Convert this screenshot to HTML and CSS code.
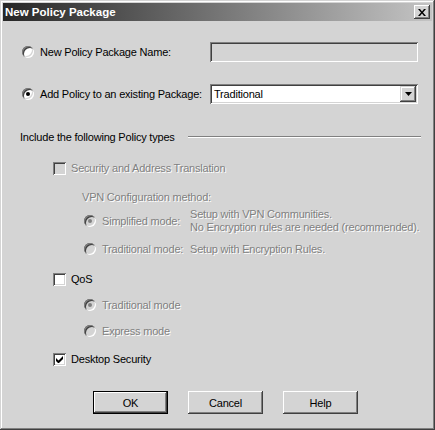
FILE: index.html
```html
<!DOCTYPE html>
<html>
<head>
<meta charset="utf-8">
<link rel="stylesheet" href="styles.css">
</head>
<body>
<div class="window">
  <div class="titlebar">
    <span class="title">New Policy Package</span>
    <span class="close"><svg width="8" height="7" viewBox="0 0 8 7"><path d="M0 0h2l2 2.5L6 0h2L5 3.5 8 7H6L4 4.5 2 7H0l3-3.5z" fill="#000"/></svg></span>
  </div>
  <div class="content">
    <div class="row r1">
      <span class="radio"></span>
      <span class="lbl wide">New Policy Package Name:</span>
      <span class="textbox"></span>
    </div>
    <div class="row r2">
      <span class="radio on"></span>
      <span class="lbl wide">Add Policy to an existing Package:</span>
      <span class="combo"><span class="combo-text">Traditional</span><span class="arrow"><svg width="7" height="4" viewBox="0 0 7 4"><path d="M0 0h7L3.5 4z" fill="#000"/></svg></span></span>
    </div>
    <div class="row heading">
      <span class="lbl head-lbl">Include the following Policy types</span>
      <span class="rule"></span>
    </div>
    <div class="row chkrow r-sat">
      <span class="check disabled"></span>
      <span class="lbl dis">Security and Address Translation</span>
    </div>
    <div class="row sub r-vpn">
      <span class="lbl dis">VPN Configuration method:</span>
    </div>
    <div class="row sub2 r-simp">
      <span class="radio on disabled"></span>
      <span class="lbl dis mode">Simplified mode:</span>
      <span class="lbl dis desc">Setup with VPN Communities.<br>No Encryption rules are needed (recommended).</span>
    </div>
    <div class="row sub2 r-trad">
      <span class="radio disabled"></span>
      <span class="lbl dis mode">Traditional mode:</span>
      <span class="lbl dis desc">Setup with Encryption Rules.</span>
    </div>
    <div class="row chkrow r-qos">
      <span class="check"></span>
      <span class="lbl">QoS</span>
    </div>
    <div class="row sub2 r-qt">
      <span class="radio on disabled"></span>
      <span class="lbl dis">Traditional mode</span>
    </div>
    <div class="row sub2 r-qe">
      <span class="radio disabled"></span>
      <span class="lbl dis">Express mode</span>
    </div>
    <div class="row chkrow r-desk">
      <span class="check"><svg width="7" height="7" viewBox="0 0 7 7"><path d="M0 2v3l2 2h1l4-4V0L2.5 4.5z" fill="#000"/></svg></span>
      <span class="lbl">Desktop Security</span>
    </div>
    <div class="buttons">
      <button class="btn default">OK</button>
      <button class="btn">Cancel</button>
      <button class="btn">Help</button>
    </div>
  </div>
</div>
</body>
</html>
```
FILE: styles.css
```css
html, body {
  margin: 0;
  padding: 0;
  background: #d4d4d4;
}
.window {
  width: 435px;
  height: 430px;
  box-sizing: border-box;
  padding: 3px;
  background: #d4d4d4;
  box-shadow: inset -1px -1px #404040, inset 1px 1px #d4d4d4, inset -2px -2px #808080, inset 2px 2px #ffffff;
  font-family: "Liberation Sans", Arial, sans-serif;
  font-size: 11px;
  letter-spacing: -0.2px;
  color: #000;
  display: flex;
  flex-direction: column;
}
.titlebar {
  height: 18px;
  background: linear-gradient(to right, #262626, #c4c4c4);
  display: flex;
  align-items: center;
  justify-content: space-between;
  padding: 0 2px 0 2px;
}
.title {
  color: #fff;
  font-weight: bold;
  font-size: 11.5px;
  letter-spacing: 0;
}
.close {
  width: 16px;
  height: 14px;
  box-sizing: border-box;
  background: #d4d4d4;
  box-shadow: inset -1px -1px #404040, inset 1px 1px #fff, inset -2px -2px #808080;
  display: flex;
  align-items: center;
  justify-content: center;
}
.close svg { display: block; margin-left: -1px; }
.content {
  display: flex;
  flex-direction: column;
  padding-top: 21px;
}
.row {
  display: flex;
  align-items: center;
  height: 14px;
}
.r1 { height: 20px; padding-left: 19px; }
.r2 { height: 20px; padding-left: 19px; margin-top: 22px; }
.lbl { white-space: nowrap; line-height: 13px; }
.wide { width: 170px; margin-left: 6px; }
.textbox {
  width: 208px;
  height: 20px;
  box-sizing: border-box;
  background: #d4d4d4;
  box-shadow: inset 1px 1px #808080, inset -1px -1px #fff, inset 2px 2px #404040, inset -2px -2px #d4d4d4;
}
.combo {
  width: 208px;
  height: 20px;
  box-sizing: border-box;
  background: #fff;
  box-shadow: inset 1px 1px #808080, inset -1px -1px #fff, inset 2px 2px #404040, inset -2px -2px #d4d4d4;
  display: flex;
  align-items: center;
  justify-content: space-between;
  padding: 2px;
}
.combo-text { padding-left: 2px; }
.arrow {
  width: 16px;
  height: 16px;
  box-sizing: border-box;
  background: #d4d4d4;
  box-shadow: inset -1px -1px #404040, inset 1px 1px #d4d4d4, inset -2px -2px #808080, inset 2px 2px #fff;
  display: flex;
  align-items: center;
  justify-content: center;
}
.arrow svg { display: block; }
.heading { margin-top: 26px; padding-left: 17px; }
.head-lbl { width: 168px; }
.rule {
  flex: 0 0 233px;
  height: 2px;
  border-top: 1px solid #808080;
  border-bottom: 1px solid #fff;
  box-sizing: border-box;
}
.chkrow { padding-left: 50px; }
.r-sat { margin-top: 17px; }
.chkrow .lbl { margin-left: 5px; }
.sub { padding-left: 79px; }
.r-vpn { margin-top: 15px; }
.sub2 { padding-left: 81px; }
.sub2 .lbl { margin-left: 6px; }
.r-simp { margin-top: 4px; height: 26px; }
.r-trad { margin-top: 8px; }
.mode { width: 82px; }
.sub2 .desc { margin-left: 6px; }
.r-qos { margin-top: 16px; }
.r-qt { margin-top: 12px; }
.r-qe { margin-top: 12px; }
.r-desk { margin-top: 14px; }
.dis {
  color: #808080;
  text-shadow: 1px 1px 0 #fff;
}
.radio {
  width: 12px;
  height: 12px;
  flex: 0 0 12px;
  border-radius: 50%;
  background: #fff;
  box-shadow: inset 1px 1px #808080, inset -1px -1px #fff, inset 2px 2px #404040, inset -2px -2px #d4d4d4;
  position: relative;
}
.radio.disabled { background: #d4d4d4; }
.radio.on::after {
  content: "";
  position: absolute;
  left: 4px;
  top: 4px;
  width: 4px;
  height: 4px;
  border-radius: 50%;
  background: #000;
}
.radio.on.disabled::after { background: #808080; }
.check {
  width: 13px;
  height: 13px;
  flex: 0 0 13px;
  box-sizing: border-box;
  background: #fff;
  box-shadow: inset 1px 1px #808080, inset -1px -1px #fff, inset 2px 2px #404040, inset -2px -2px #d4d4d4;
  display: flex;
  align-items: center;
  justify-content: center;
}
.check.disabled { background: #d4d4d4; }
.check svg { display: block; }
.buttons {
  display: flex;
  gap: 20px;
  padding-left: 90px;
  margin-top: 25px;
}
.btn {
  width: 75px;
  height: 23px;
  margin: 0;
  padding: 0;
  border: none;
  background: #d4d4d4;
  box-shadow: inset -1px -1px #404040, inset 1px 1px #fff, inset -2px -2px #808080, inset 2px 2px #d4d4d4;
  font-family: "Liberation Sans", Arial, sans-serif;
  font-size: 11px;
  letter-spacing: -0.2px;
  color: #000;
}
.btn.default {
  box-shadow: inset 0 0 0 1px #000, inset -2px -2px #404040, inset 2px 2px #fff, inset -3px -3px #808080;
}
```
